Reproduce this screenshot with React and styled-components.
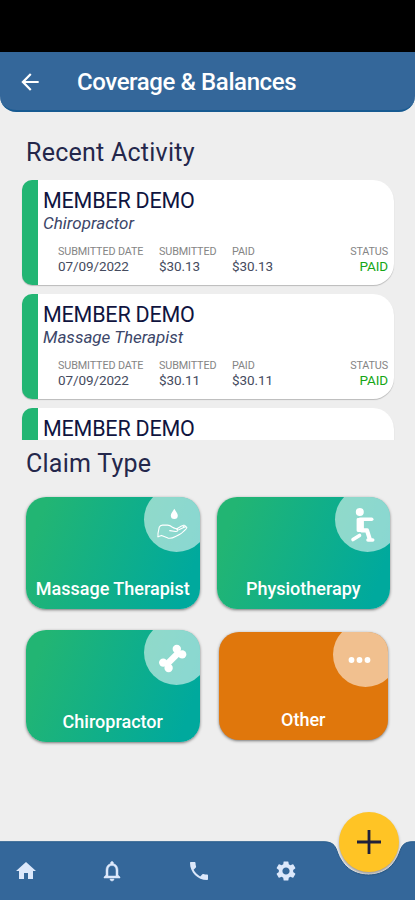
import React from 'react'
import styled, { createGlobalStyle } from 'styled-components'
import { MdArrowBack, MdHome, MdNotificationsNone, MdPhone, MdSettings } from 'react-icons/md'

const GlobalStyle = createGlobalStyle`
    *{
        box-sizing:border-box;
    }
    body{
        margin:0;
        background-color:#eeeeee;
        font-family:Roboto, sans-serif;
    }
`
const Container = styled.div`
    width:415px;
    height:900px;
    display:flex;
    flex-direction:column;
    background-color:#eeeeee;
    color:#10143f;
    overflow:hidden;
`
const StatusBar = styled.div`
    height:52px;
    background-color:black;
`
const Header = styled.header`
    height:60px;
    padding:1px 17px 0px;
    display:flex;
    align-items:center;
    gap:34px;
    color:white;
    background-color:#34679a;
    border-radius:0px 0px 16px 16px;
    border-bottom:2px solid #175a91;
    svg{
        display:block;
        width:26px;
        height:26px;
    }
`
const Title = styled.h1`
    margin:0px;
    font-size:24px;
    line-height:28px;
    font-weight:500;
    letter-spacing:-0.4px;
    white-space:nowrap;
`
const Main = styled.main`
    flex:1;
`
const SectionTitle = styled.h2`
    margin:${(props) => props.$margin};
    font-size:25px;
    line-height:30px;
    font-weight:400;
    letter-spacing:0.25px;
    color:#24274b;
`
const ClaimList = styled.div`
    height:262px;
    padding:2px 21px 0px 22px;
    display:flex;
    flex-direction:column;
    gap:9px;
    overflow:hidden;
`
const Card = styled.article`
    flex:none;
    height:105px;
    border-left:16px solid #22b573;
    border-radius:10px 21px 21px 10px;
    background-color:white;
    box-shadow:0px 1px 1px rgba(0,0,0,0.22);
    padding:9px 6px 0px 5px;
`
const Member = styled.div`
    font-size:21.5px;
    line-height:24px;
    letter-spacing:-0.2px;
`
const Provider = styled.div`
    font-size:17px;
    line-height:20px;
    font-style:italic;
    letter-spacing:0px;
    color:#3c4669;
`
const Details = styled.div`
    display:grid;
    grid-template-columns:101px 73px 1fr auto;
    margin:12px 0px 0px 15px;
`
const Detail = styled.div`
    text-align:${(props) => props.$align || 'left'};
`
const Label = styled.div`
    font-size:10.8px;
    line-height:13px;
    letter-spacing:-0.13px;
    color:#858585;
`
const Value = styled.div`
    font-size:13.5px;
    line-height:16px;
    letter-spacing:-0.1px;
    color:${(props) => props.$color || '#454b5e'};
`
const Grid = styled.div`
    display:grid;
    grid-template-columns:173.5px 173.5px;
    column-gap:17px;
    row-gap:21px;
    padding:0px 26px;
`
const Tile = styled.div`
    position:relative;
    height:112px;
    display:flex;
    align-items:flex-end;
    justify-content:center;
    padding-bottom:8px;
    border-radius:20px;
    overflow:hidden;
    color:white;
    font-size:18px;
    line-height:25px;
    font-weight:500;
    white-space:nowrap;
    background:linear-gradient(110deg, #22b573 10%, #00a99d 90%);
    box-shadow:0px 1px 3px rgba(0,0,0,0.5);
`
const OtherTile = styled(Tile)`
    height:108px;
    margin:2px 2px 0px;
    background:#e0770c;
`
const Badge = styled.div`
    position:absolute;
    top:-10px;
    right:-9.5px;
    width:65px;
    height:65px;
    border-radius:50%;
    background-color:rgba(255,255,255,0.54);
    > svg{
        position:absolute;
        left:9.5px;
        top:14px;
        width:44px;
        height:44px;
    }
`
const Footer = styled.nav`
    position:relative;
    height:59px;
    display:flex;
    padding:0px 84px 0px 0px;
    color:#dce8fb;
`
const FooterShape = styled.svg`
    position:absolute;
    left:0px;
    top:0px;
`
const Tab = styled.div`
    position:relative;
    width:86.6px;
    flex:none;
    display:flex;
    justify-content:center;
    padding:18px 35px 0px 0px;
    svg{
        width:24px;
        height:24px;
    }
    path:last-of-type{
        stroke:currentColor;
        stroke-width:${(props) => (props.$bold ? '0.5px' : '0px')};
    }
`
const AddButton = styled.button`
    position:absolute;
    left:339px;
    top:-29.5px;
    width:60px;
    height:60px;
    padding:0px;
    border:none;
    border-radius:50%;
    background-color:#ffc425;
    color:#20203a;
    box-shadow:0px 2px 3px rgba(0,0,0,0.35);
    svg{
        display:block;
    }
`

const HandIcon = () => (
    <svg viewBox="0 0.700 44 44" fill="none" stroke="white" strokeWidth="1.1" strokeLinejoin="round" strokeLinecap="round">
        <path d="M20.300 8.500c1.600 3 3.500 4.700 3.500 6.800a3.500 3.500 0 0 1-7 0C16.800 13.200 18.700 11.500 20.300 8.500z" fill="white" stroke="none" />
        <path d="M4 36.500V33l1.200-6c.6-1.600 1.500-2.200 3.300-2.200h5c2 0 3.500 1 5 2.200 1.800 1.300 4 1.200 5.200 2.200.7 1-.5 2.200-2 2l-6-.9" />
        <path d="M4 36.500l3.500-1.400 6.500 2.700c3 .8 5-.2 7.500-1.600 4.500-1.800 8.500-5 11-8 .9-1.400-.4-2.200-1.700-1.600l-6 2.900" />
        <path d="M22.500 28.700l5-3c1.200-.6 2.300-.1 1.900 1.200M26.500 26.300l3-1.300c1.300-.3 1.900.2 1.600 1.600" />
    </svg>
)

const LungeIcon = () => (
    <svg viewBox="0 0 44 44" fill="none" stroke="white" strokeLinejoin="round" strokeLinecap="round">
        <circle cx="15.800" cy="11" r="4" fill="white" stroke="none" />
        <path d="M14 18.500V29.500h4.500V18.500z" fill="white" strokeWidth="2.800" />
        <path d="M16 18.200h11.700" strokeWidth="3.600" />
        <path d="M17.500 29.300h5.500l2.700 8.500" strokeWidth="4.200" />
        <path d="M15.500 34.500l-6.500 4" strokeWidth="3.600" />
        <path d="M24 39h4.700" strokeWidth="3.600" />
    </svg>
)

const BoneIcon = () => (
    <svg viewBox="0 0 44 44">
        <g transform="translate(18.700 24.500) rotate(-45)" fill="white">
            <rect x="-10" y="-3.200" width="20" height="6.400" />
            <circle cx="-9.600" cy="-3.800" r="4.200" />
            <circle cx="-9.600" cy="3.800" r="4.200" />
            <circle cx="9.600" cy="-3.800" r="4.200" />
            <circle cx="9.600" cy="3.800" r="4.200" />
        </g>
    </svg>
)

const DotsIcon = () => (
    <svg viewBox="0 0 44 44" fill="white">
        <circle cx="9.500" cy="24" r="2.900" />
        <circle cx="17.500" cy="24" r="2.900" />
        <circle cx="25.500" cy="24" r="2.900" />
    </svg>
)

const claims = [
    { id: 1, provider: 'Chiropractor', amount: '$30.13' },
    { id: 2, provider: 'Massage Therapist', amount: '$30.11' },
    { id: 3 },
]

const Claim = ({ claim }) => (
    <Card>
        <Member>MEMBER DEMO</Member>
        {claim.provider && (
            <>
                <Provider>{claim.provider}</Provider>
                <Details>
                    <Detail>
                        <Label>SUBMITTED DATE</Label>
                        <Value>07/09/2022</Value>
                    </Detail>
                    <Detail>
                        <Label>SUBMITTED</Label>
                        <Value>{claim.amount}</Value>
                    </Detail>
                    <Detail>
                        <Label>PAID</Label>
                        <Value>{claim.amount}</Value>
                    </Detail>
                    <Detail $align="right">
                        <Label>STATUS</Label>
                        <Value $color="#16a616">PAID</Value>
                    </Detail>
                </Details>
            </>
        )}
    </Card>
)

const App = () => {
  return (
    <Container>
        <GlobalStyle />
        <StatusBar />
        <Header>
            <MdArrowBack />
            <Title>Coverage &amp; Balances</Title>
        </Header>
        <Main>
            <SectionTitle $margin="26px 26px 10px">Recent Activity</SectionTitle>
            <ClaimList>
                {claims.map((claim) => (
                    <Claim key={claim.id} claim={claim} />
                ))}
            </ClaimList>
            <SectionTitle $margin="9px 26px 18px">Claim Type</SectionTitle>
            <Grid>
                <Tile>
                    <Badge><HandIcon /></Badge>
                    Massage Therapist
                </Tile>
                <Tile>
                    <Badge><LungeIcon /></Badge>
                    Physiotherapy
                </Tile>
                <Tile>
                    <Badge><BoneIcon /></Badge>
                    Chiropractor
                </Tile>
                <OtherTile>
                    <Badge><DotsIcon /></Badge>
                    Other
                </OtherTile>
            </Grid>
        </Main>
        <Footer>
            <FooterShape width="415" height="59" viewBox="0 0 415 59">
                <path d="M0 .5H324C332 .5 335 4 337 10C342 25 353 34 368.500 34C384 34 395 25 400 10C402 4 405 .5 412 .5H415V59H0z" fill="#34679a" />
                <path d="M0 .8H324C332 .8 335 4 337 10C342 25 353 34 368.500 34C384 34 395 25 400 10C402 4 405 .8 412 .8H415" fill="none" stroke="#2b5f8e" />
            </FooterShape>
            <Tab><MdHome /></Tab>
            <Tab $bold><MdNotificationsNone /></Tab>
            <Tab><MdPhone /></Tab>
            <Tab><MdSettings /></Tab>
            <AddButton>
                <svg width="60" height="60" viewBox="0 0 60 60" stroke="currentColor" strokeWidth="2.800">
                    <path d="M18 30h24M30 18v24" />
                </svg>
            </AddButton>
        </Footer>
    </Container>
  )
}

export default App
